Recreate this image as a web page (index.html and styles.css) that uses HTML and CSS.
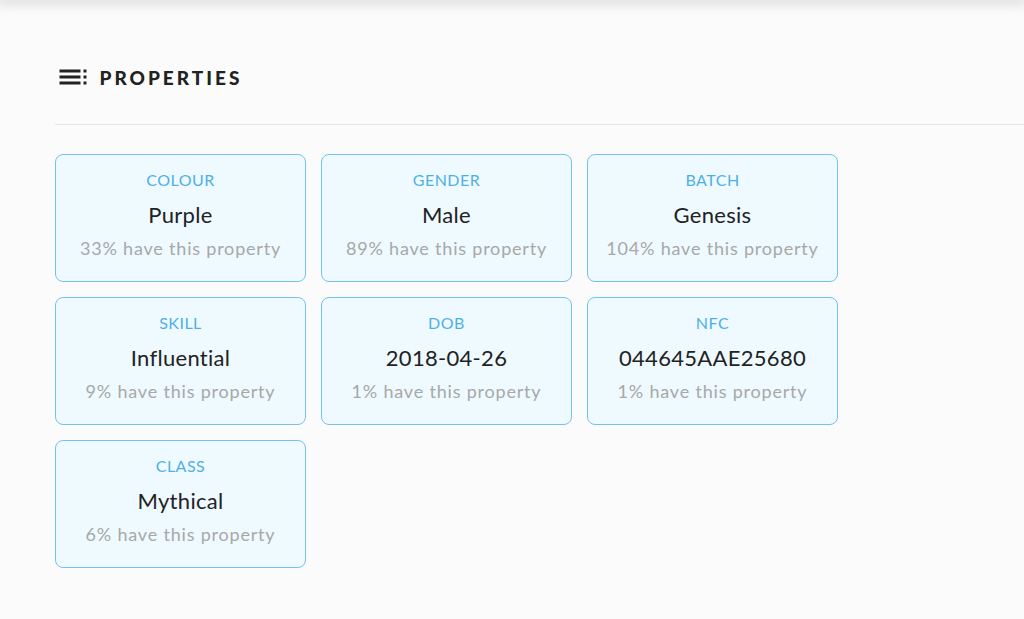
FILE: index.html
```html
<!DOCTYPE html>
<html>
<head>
<meta charset="utf-8">
<link rel="stylesheet" href="styles.css">
</head>
<body>
<div class="topbar"></div>
<main class="page">
  <header class="heading">
    <svg class="heading-icon" viewBox="0 0 24 24" width="36" height="36"><path fill="#222" d="M3 9h14V7H3v2zm0 4h14v-2H3v2zm0 4h14v-2H3v2zm16 0h2v-2h-2v2zm0-10v2h2V7h-2zm0 6h2v-2h-2v2z"/></svg>
    <h2 class="heading-title">PROPERTIES</h2>
  </header>
  <div class="divider"></div>
  <section class="grid">
    <div class="card"><div class="label">COLOUR</div><div class="value">Purple</div><div class="sub">33% have this property</div></div>
    <div class="card"><div class="label">GENDER</div><div class="value">Male</div><div class="sub">89% have this property</div></div>
    <div class="card"><div class="label">BATCH</div><div class="value">Genesis</div><div class="sub">104% have this property</div></div>
    <div class="card"><div class="label">SKILL</div><div class="value">Influential</div><div class="sub">9% have this property</div></div>
    <div class="card"><div class="label">DOB</div><div class="value">2018-04-26</div><div class="sub">1% have this property</div></div>
    <div class="card"><div class="label">NFC</div><div class="value">044645AAE25680</div><div class="sub">1% have this property</div></div>
    <div class="card"><div class="label">CLASS</div><div class="value">Mythical</div><div class="sub">6% have this property</div></div>
  </section>
</main>
</body>
</html>
```
FILE: styles.css
```css
html, body {
  margin: 0;
  padding: 0;
  background: #fbfbfb;
  font-family: "Lato", "Noto Sans", sans-serif;
  height: 619px;
  overflow: hidden;
}
.topbar {
  height: 0;
  box-shadow: 0 0 12px 4px rgba(0,0,0,0.15);
}
.page {
  padding: 59px 0 0 55px;
}
.heading {
  display: flex;
  align-items: center;
  height: 36px;
}
.heading-icon {
  display: block;
  margin-left: -0.5px;
}
.heading-title {
  margin: 0 0 0 9px;
  font-size: 19px;
  font-weight: 900;
  letter-spacing: 3px;
  color: #222;
}
.divider {
  margin-top: 29px;
  height: 1px;
  background: #e6e6e6;
}
.grid {
  margin-top: 29px;
  display: grid;
  grid-template-columns: repeat(3, 251px);
  grid-auto-rows: 128px;
  gap: 15px;
}
.card {
  box-sizing: border-box;
  border: 1px solid #74c2ef;
  border-radius: 8px;
  background: #eefaff;
  text-align: center;
  padding-top: 15px;
}
.label {
  font-size: 16px;
  letter-spacing: 0.5px;
  color: #4fb0e6;
  line-height: 20px;
}
.value {
  margin-top: 12px;
  font-size: 22px;
  letter-spacing: 0.3px;
  color: #222;
  line-height: 26px;
}
.sub {
  margin-top: 9px;
  font-size: 18px;
  letter-spacing: 0.8px;
  color: #a8a8a8;
  line-height: 22px;
}
```
